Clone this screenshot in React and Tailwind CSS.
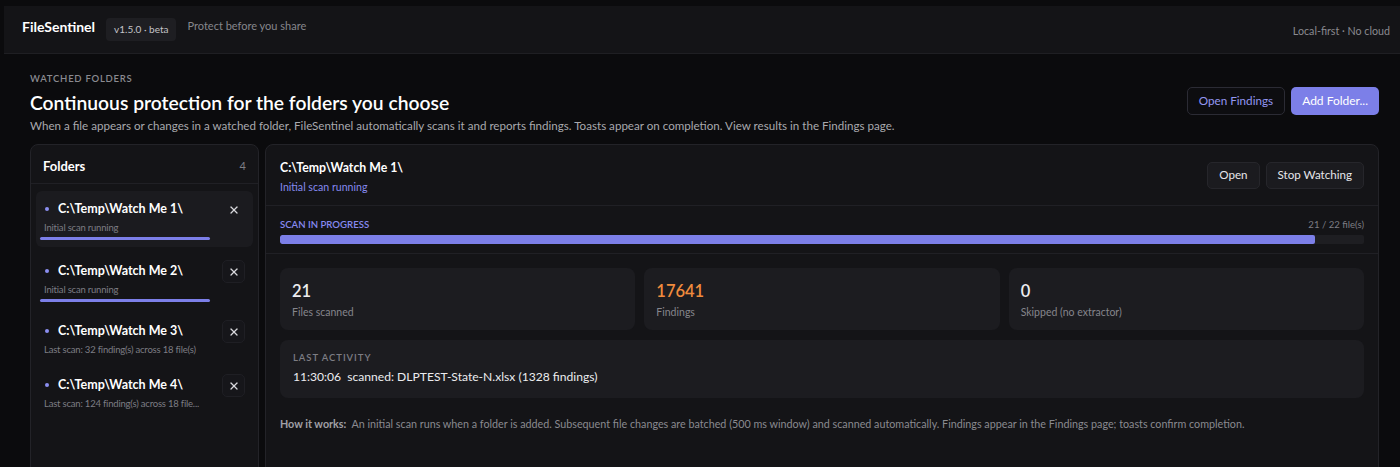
import { X } from 'lucide-react';

const folders = [
  { path: 'C:\\Temp\\Watch Me 1\\', sub: 'Initial scan running', progress: true, active: true, h: 'h-[56px]' },
  { path: 'C:\\Temp\\Watch Me 2\\', sub: 'Initial scan running', progress: true, h: 'h-[54px]' },
  { path: 'C:\\Temp\\Watch Me 3\\', sub: 'Last scan: 32 finding(s) across 18 file(s)', h: 'h-[48px]' },
  { path: 'C:\\Temp\\Watch Me 4\\', sub: 'Last scan: 124 finding(s) across 18 file...', h: 'h-[48px]' },
];

function FolderItem({ folder }) {
  return (
    <div
      className={`flex items-start justify-between rounded-md pl-[4px] pr-2 pt-[8px] ${folder.h} ${
        folder.active ? 'bg-[#1b1b1f]' : ''
      }`}
    >
      <div className="min-w-0 flex-1">
        <div className="flex items-center gap-[9px] pl-[5px]">
          <span className="h-[4px] w-[4px] shrink-0 rounded-full bg-[#8b8ef0]" />
          <span className="text-[12.5px] font-bold leading-[20px] text-white">{folder.path}</span>
        </div>
        <div className="mt-[1px] truncate pl-[4px] text-[9.5px] leading-[16px] tracking-[-0.2px] text-[#7d7d84]">{folder.sub}</div>
        {folder.progress && <div className="mt-[1px] h-[3px] w-[170px] rounded-full bg-[#7c7fe8]" />}
      </div>
      <button
        className={`-mt-[1px] flex h-[23px] w-[23px] shrink-0 items-center justify-center rounded-[5px] ${
          folder.active ? '' : 'border border-[#1f1f24] bg-[#16161a]'
        }`}
      >
        <X size={12} strokeWidth={2.6} className="text-[#d8d8dc]" />
      </button>
    </div>
  );
}

function Stat({ value, label, accent }) {
  return (
    <div className="flex-1 rounded-lg bg-[#1c1c20] px-3 pt-[12px] pb-[9px]">
      <div className={`text-[16.5px] font-semibold leading-[22px] ${accent ? 'text-[#f08b3d]' : 'text-[#ececef]'}`}>{value}</div>
      <div className="mt-[1px] text-[10.5px] leading-[18px] text-[#85858c]">{label}</div>
    </div>
  );
}

export default function App() {
  return (
    <div className="h-[467px] overflow-hidden bg-[#0b0b0d] pl-[4px] pt-[6px] font-['Lato','Noto_Sans',sans-serif] text-white">
      <header className="flex h-[48px] items-center border-b border-[#1f1f23] bg-[#141417] pl-[18px] pr-[10px]">
        <span className="-mt-[6px] text-[14px] font-bold text-white">FileSentinel</span>
        <span className="ml-[11px] rounded-[4px] bg-[#1e1e22] px-[8px] py-[4px] text-[10px] leading-[15px] text-[#c4c4c8]">
          v1.5.0 · beta
        </span>
        <span className="ml-[11px] -mt-[6px] text-[11px] text-[#86868c]">Protect before you share</span>
        <span className="ml-auto mt-[4px] text-[10.7px] text-[#8a8a90]">Local-first · No cloud</span>
      </header>

      <main className="pl-[26px] pr-[21px] pt-[18px]">
        <div className="flex items-start justify-between">
          <div>
            <div className="text-[9.5px] font-semibold uppercase leading-[14px] tracking-[0.08em] text-[#8a8a90]">Watched folders</div>
            <h1 className="mt-[2px] text-[19.3px] font-semibold leading-[30px] text-white">
              Continuous protection for the folders you choose
            </h1>
            <p className="text-[11.6px] leading-[16px] text-[#a9a9ae]">
              When a file appears or changes in a watched folder, FileSentinel automatically scans it and reports findings. Toasts appear on completion. View results in the Findings page.
            </p>
          </div>
          <div className="mt-[15px] flex gap-[6px]">
            <button className="h-[28px] rounded-[5px] border border-[#2b2b34] bg-[#0d0d10] px-[11px] text-[11.7px] text-[#9396f2]">
              Open Findings
            </button>
            <button className="h-[28px] rounded-[5px] bg-[#7c7fe8] px-[11px] text-[12px] text-white">Add Folder...</button>
          </div>
        </div>

        <div className="mt-[10px] flex gap-[6px]">
          <aside className="h-[340px] w-[229px] shrink-0 rounded-lg border border-[#232328] bg-[#141417]">
            <div className="flex h-[39px] items-center justify-between border-b border-[#202025] px-3 pt-[5px]">
              <span className="text-[13px] font-bold">Folders</span>
              <span className="text-[11px] text-[#7d7d84]">4</span>
            </div>
            <div className="flex flex-col gap-[6px] px-[5px] pt-[7px]">
              {folders.map((f) => (
                <FolderItem key={f.path} folder={f} />
              ))}
            </div>
          </aside>

          <section className="h-[340px] flex-1 rounded-lg border border-[#232328] bg-[#141417]">
            <div className="flex h-[61px] items-center justify-between border-b border-[#202025] px-[14px]">
              <div className="pt-[3px]">
                <div className="text-[12.3px] font-bold leading-[20px]">C:\Temp\Watch Me 1\</div>
                <div className="text-[10.6px] leading-[18px] text-[#8689f0]">Initial scan running</div>
              </div>
              <div className="flex gap-[6px]">
                <button className="h-[27px] rounded-[5px] border border-[#26262b] bg-[#1b1b1f] px-[11px] text-[11.6px] text-[#e6e6ea]">Open</button>
                <button className="h-[27px] rounded-[5px] border border-[#26262b] bg-[#1b1b1f] px-[11px] text-[11.6px] text-[#e6e6ea]">Stop Watching</button>
              </div>
            </div>

            <div className="border-b border-[#202025] px-[14px] pt-[12px] pb-[9px]">
              <div className="flex items-center justify-between">
                <span className="text-[9.6px] font-semibold uppercase text-[#8689f0]">Scan in progress</span>
                <span className="text-[9.6px] text-[#7d7d84]">21 / 22 file(s)</span>
              </div>
              <div className="mt-[3px] h-[9px] overflow-hidden rounded-[2px] bg-[#1e1e22]">
                <div className="h-full rounded-[2px] bg-[#7c7fe8]" style={{ width: `${(21 / 22) * 100}%` }} />
              </div>
            </div>

            <div className="px-[14px] pt-[14px]">
              <div className="flex gap-[9px]">
                <Stat value="21" label="Files scanned" />
                <Stat value="17641" label="Findings" accent />
                <Stat value="0" label="Skipped (no extractor)" />
              </div>
              <div className="mt-[10px] h-[58px] rounded-lg bg-[#1c1c20] px-[13px] pt-[11px]">
                <div className="text-[9.5px] font-semibold uppercase leading-[14px] tracking-[0.1em] text-[#7d7d84]">Last activity</div>
                <div className="mt-[3px] text-[12.1px] leading-[18px] text-[#ececef]">
                  11:30:06&nbsp; scanned: DLPTEST-State-N.xlsx (1328 findings)
                </div>
              </div>
              <p className="mt-[18px] text-[10.75px] text-[#8a8a90]">
                <span className="font-bold text-[#a0a0a6]">How it works:</span>&nbsp; An initial scan runs when a folder is added. Subsequent file changes are batched (500 ms window) and scanned automatically. Findings appear in the Findings page; toasts confirm completion.
              </p>
            </div>
          </section>
        </div>
      </main>
    </div>
  );
}
